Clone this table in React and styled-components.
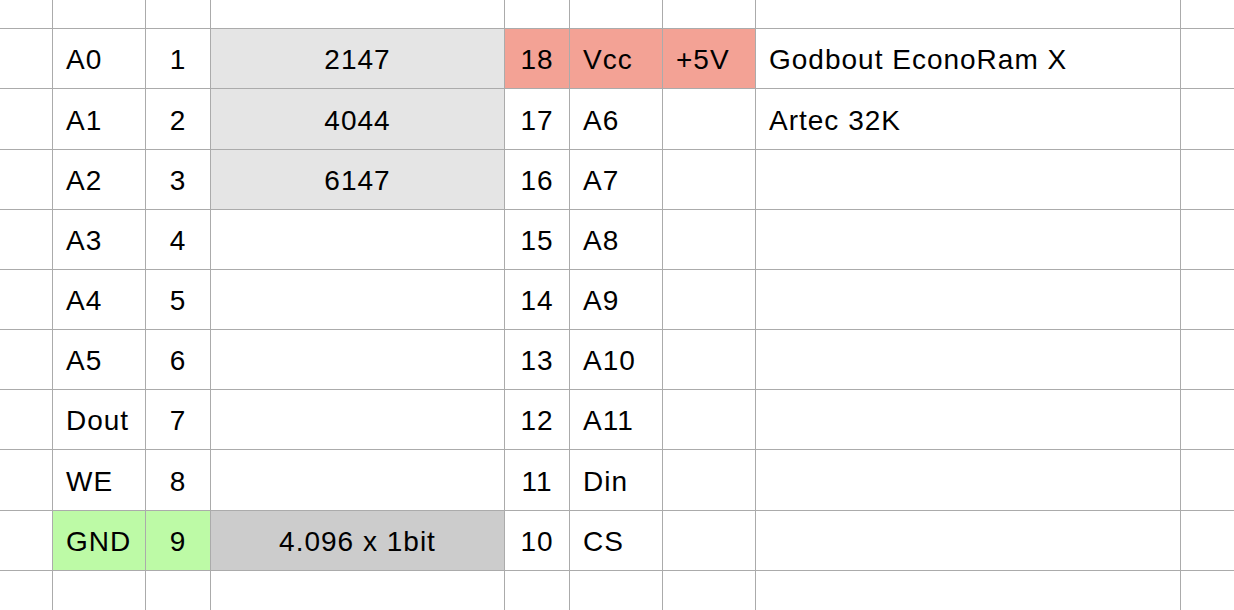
import React from 'react'
import styled, { createGlobalStyle } from 'styled-components';

const GlobalStyle = createGlobalStyle`
  html, body {
    margin: 0;
    padding: 0;
    background: #ffffff;
  }
  body {
    font-family: "Liberation Sans", Arial, Helvetica, sans-serif;
    overflow: hidden;
  }
`;

const fills = {
    light: "#e5e5e5",
    dark: "#cccccc",
    red: "#f3a295",
    green: "#bdfaa6",
};

const Sheet = styled.div`
  display: grid;
  grid-template-columns: 53px 93px 65px 294px 65px 93px 93px 425px 1fr;
  grid-template-rows: 29px 60px 61px 60px 60px 60px 60px 60px 61px 60px 39px;
  width: 1234px;
  height: 610px;
  background: #ffffff;
`;

const Cell = styled.div`
  box-sizing: border-box;
  display: flex;
  align-items: center;
  justify-content: ${({ $center }) => ($center ? "center" : "flex-start")};
  padding: ${({ $center }) => ($center ? "3px 2px 0" : "3px 0 0 13px")};
  border-right: ${({ $last }) => ($last ? "none" : "1px solid #ababab")};
  border-bottom: ${({ $bottom }) => ($bottom ? "none" : "1px solid #ababab")};
  background: ${({ $fill }) => fills[$fill] || "transparent"};
  color: #000000;
  font-size: 28px;
  letter-spacing: 1px;
  white-space: nowrap;
  overflow: hidden;
`;

// one entry per sheet row: [signal, pin, chip, pin, signal, power, note]
const rows = [
    [{ t: "A0" }, { t: "1" }, { t: "2147", f: "light" }, { t: "18", f: "red" }, { t: "Vcc", f: "red" }, { t: "+5V", f: "red" }, { t: "Godbout EconoRam X" }],
    [{ t: "A1" }, { t: "2" }, { t: "4044", f: "light" }, { t: "17" }, { t: "A6" }, {}, { t: "Artec 32K" }],
    [{ t: "A2" }, { t: "3" }, { t: "6147", f: "light" }, { t: "16" }, { t: "A7" }, {}, {}],
    [{ t: "A3" }, { t: "4" }, {}, { t: "15" }, { t: "A8" }, {}, {}],
    [{ t: "A4" }, { t: "5" }, {}, { t: "14" }, { t: "A9" }, {}, {}],
    [{ t: "A5" }, { t: "6" }, {}, { t: "13" }, { t: "A10" }, {}, {}],
    [{ t: "Dout" }, { t: "7" }, {}, { t: "12" }, { t: "A11" }, {}, {}],
    [{ t: "WE" }, { t: "8" }, {}, { t: "11" }, { t: "Din" }, {}, {}],
    [{ t: "GND", f: "green" }, { t: "9", f: "green" }, { t: "4.096 x 1bit", f: "dark" }, { t: "10" }, { t: "CS" }, {}, {}],
];

// columns with centred text (pin numbers and chip names)
const centered = [false, true, true, true, false, false, false];

function BlankRow({ bottom }) {
    return (
        <>
            {Array.from({ length: 9 }).map((_, i) => (
                <Cell key={i} $last={i === 8} $bottom={bottom} />
            ))}
        </>
    );
}

function App() {
    return (
        <>
            <GlobalStyle />
            <Sheet>
                <BlankRow />
                {rows.map((row, r) => (
                    <React.Fragment key={r}>
                        <Cell />
                        {row.map((c, i) => (
                            <Cell key={i} $center={centered[i]} $fill={c.f}>
                                {c.t}
                            </Cell>
                        ))}
                        <Cell $last />
                    </React.Fragment>
                ))}
                <BlankRow bottom />
            </Sheet>
        </>
    );
}

export default App
